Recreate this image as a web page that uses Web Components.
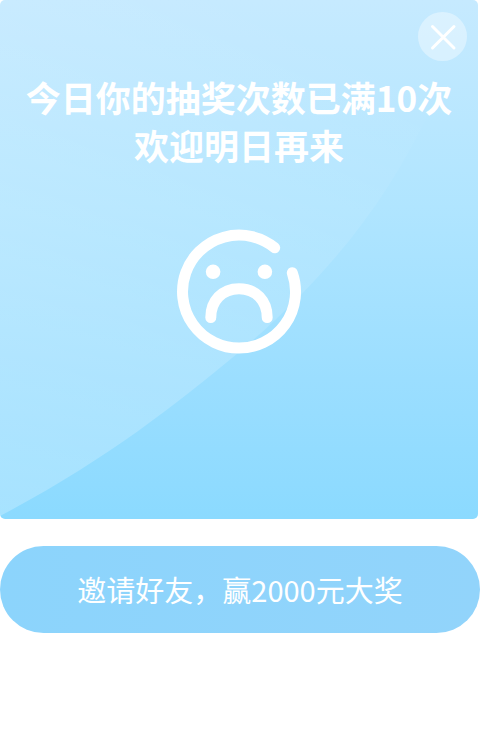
<!DOCTYPE html>
<html lang="zh-CN">
<head>
<meta charset="utf-8">
<meta name="viewport" content="width=device-width, initial-scale=1">
<title>抽奖提示</title>
<style>
body { margin: 0; background: #fff; color: #fff; font-family: "Noto Sans CJK SC", sans-serif; }
</style>
</head>
<body>
<limit-dialog>
  <notice-card>
    <close-button slot="close"></close-button>
    <span slot="title">今日你的抽奖次数已满10次<br>欢迎明日再来</span>
    <sad-face></sad-face>
  </notice-card>
  <invite-button>邀请好友，赢2000元大奖</invite-button>
</limit-dialog>
<script>
const define = (name, html) => customElements.define(name, class extends HTMLElement {
  constructor() {
    super();
    this.attachShadow({ mode: "open" }).innerHTML = html;
  }
});

define("limit-dialog", `
<style>
:host { display: flex; flex-direction: column; gap: 27px; }
</style>
<slot></slot>`);

define("notice-card", `
<style>
:host { display: grid; margin-right: 2px; border-radius: 5px; overflow: hidden;
  background: linear-gradient(#c6eaff, #b0e5ff 40%, #9bdeff 73%, #8bdaff); }
.shine, .content { grid-area: 1 / 1; }
.shine { width: 100%; height: 100%; min-height: 0; }
.content { display: flex; flex-direction: column; align-items: center; padding: 12px 11px 165px; }
header { align-self: flex-end; display: flex; }
h1 { margin: 12px 0 0; font-size: 35px; line-height: 48px; font-weight: 700; text-align: center; }
.face { display: flex; margin-top: 59px; }
</style>
<svg class="shine" viewBox="0 0 478 519" preserveAspectRatio="none" aria-hidden="true">
  <defs>
    <linearGradient id="g" gradientUnits="userSpaceOnUse" x1="0" y1="519" x2="240" y2="0">
      <stop offset="0" stop-color="#fff" stop-opacity=".24"/>
      <stop offset=".4" stop-color="#fff" stop-opacity=".18"/>
      <stop offset="1" stop-color="#fff" stop-opacity="0"/>
    </linearGradient>
  </defs>
  <path d="M0 516C104 461 173 407 238 353C322 282 385 207 430 110L478 0H0Z" fill="url(#g)"/>
</svg>
<div class="content">
  <header><slot name="close"></slot></header>
  <h1><slot name="title"></slot></h1>
  <div class="face"><slot></slot></div>
</div>`);

define("close-button", `
<style>
:host { display: block; }
button { display: block; width: 49px; height: 49px; padding: 0; border: 0; border-radius: 50%;
  background: rgba(255,255,255,.38); color: inherit; cursor: pointer; }
svg { display: block; width: 49px; height: 49px; }
</style>
<button type="button" aria-label="关闭">
  <svg viewBox="0 0 49 49" fill="none" stroke="currentColor" stroke-width="3" stroke-linecap="round" aria-hidden="true">
    <path d="M14.5 14.5L36 36M36 14.5L14.5 36"/>
  </svg>
</button>`);

define("sad-face", `
<style>
:host { display: block; }
svg { display: block; width: 126px; height: 126px; }
</style>
<svg viewBox="0 0 126 126" fill="none" stroke="currentColor" stroke-width="11" stroke-linecap="round" role="img" aria-label="难过的表情">
  <path d="M98.7 19.8A56.5 56.5 0 1 0 116.3 44.8"/>
  <path d="M34.8 89.5C34.8 73 46 60.7 63 60.7S91.2 73 91.2 89.5"/>
  <g fill="currentColor" stroke="none">
    <circle cx="37.1" cy="43.8" r="7.3"/>
    <circle cx="88.9" cy="43.8" r="7.3"/>
  </g>
</svg>`);

define("invite-button", `
<style>
:host { display: block; }
button { display: block; width: 100%; padding: 22px 16px; border: 0; border-radius: 44px;
  background: linear-gradient(90deg, #8cd4fc, #92d4fb); color: inherit;
  font-family: inherit; font-size: 29px; font-weight: 400; line-height: 43px; cursor: pointer; }
</style>
<button type="button"><slot></slot></button>`);
</script>
</body>
</html>
